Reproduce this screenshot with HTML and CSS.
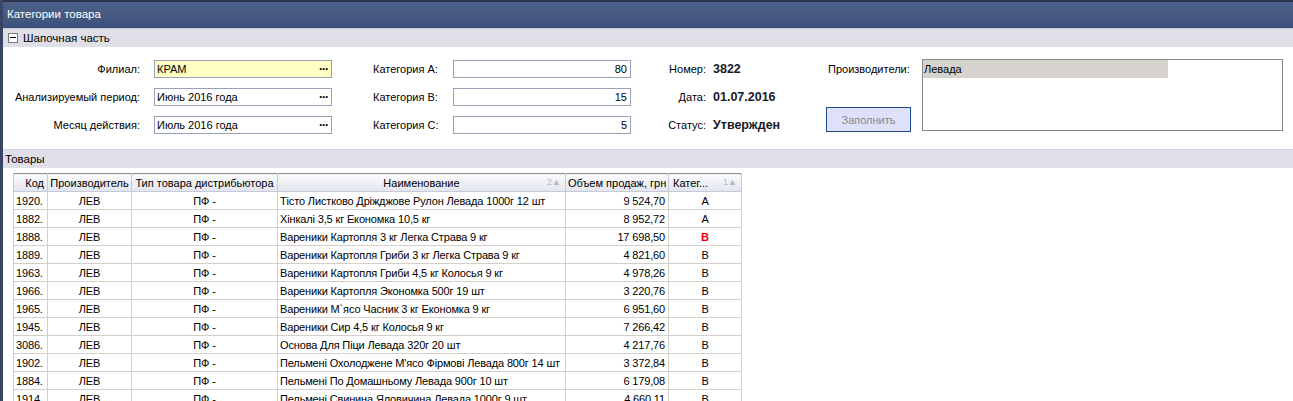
FILE: index.html
```html
<!DOCTYPE html>
<html lang="ru">
<head>
<meta charset="utf-8">
<title>Категории товара</title>
<link rel="stylesheet" href="styles.css">
</head>
<body>
<div class="window">
  <div class="titlebar">Категории товара</div>
  <div class="section-head"><span class="collapse"></span>Шапочная часть</div>
  <div class="form">
    <div class="group g1">
      <label>Филиал:</label>
      <div class="input yellow"><span>КРАМ</span><span class="dots">···</span></div>
      <label>Анализируемый период:</label>
      <div class="input"><span>Июнь 2016 года</span><span class="dots">···</span></div>
      <label>Месяц действия:</label>
      <div class="input"><span>Июль 2016 года</span><span class="dots">···</span></div>
    </div>
    <div class="group g2">
      <label>Категория A:</label>
      <div class="input num">80</div>
      <label>Категория B:</label>
      <div class="input num">15</div>
      <label>Категория C:</label>
      <div class="input num">5</div>
    </div>
    <div class="group g3">
      <label>Номер:</label>
      <div class="value">3822</div>
      <label>Дата:</label>
      <div class="value">01.07.2016</div>
      <label>Статус:</label>
      <div class="value">Утвержден</div>
    </div>
    <div class="g4">
      <label>Производители:</label>
      <button class="fill" disabled>Заполнить</button>
    </div>
    <div class="listbox">
      <div class="list-item">Левада</div>
    </div>
  </div>
  <div class="section-head goods">Товары</div>
  <div class="grid-wrap">
    <table class="grid">
      <colgroup>
        <col class="c-code"><col class="c-man"><col class="c-type"><col class="c-name"><col class="c-vol"><col class="c-cat">
      </colgroup>
      <thead>
        <tr>
          <th class="r">Код</th>
          <th>Производитель</th>
          <th>Тип товара дистрибьютора</th>
          <th>Наименование<span class="sort">2▲</span></th>
          <th>Объем продаж, грн</th>
          <th class="l">Катег...<span class="sort">1▲</span></th>
        </tr>
      </thead>
      <tbody>
        <tr><td>1920.</td><td class="c">ЛЕВ</td><td class="c">ПФ -</td><td>Тісто Листково Дріжджове Рулон Левада 1000г 12 шт</td><td class="r">9 524,70</td><td class="c">A</td></tr>
        <tr><td>1882.</td><td class="c">ЛЕВ</td><td class="c">ПФ -</td><td>Хінкалі 3,5 кг Економка 10,5 кг</td><td class="r">8 952,72</td><td class="c">A</td></tr>
        <tr><td>1888.</td><td class="c">ЛЕВ</td><td class="c">ПФ -</td><td>Вареники Картопля 3 кг Легка Страва 9 кг</td><td class="r">17 698,50</td><td class="c red">B</td></tr>
        <tr><td>1889.</td><td class="c">ЛЕВ</td><td class="c">ПФ -</td><td>Вареники Картопля Гриби 3 кг Легка Страва 9 кг</td><td class="r">4 821,60</td><td class="c">B</td></tr>
        <tr><td>1963.</td><td class="c">ЛЕВ</td><td class="c">ПФ -</td><td>Вареники Картопля Гриби 4,5 кг Колосья 9 кг</td><td class="r">4 978,26</td><td class="c">B</td></tr>
        <tr><td>1966.</td><td class="c">ЛЕВ</td><td class="c">ПФ -</td><td>Вареники Картопля Экономка 500г 19 шт</td><td class="r">3 220,76</td><td class="c">B</td></tr>
        <tr><td>1965.</td><td class="c">ЛЕВ</td><td class="c">ПФ -</td><td>Вареники М`ясо Часник 3 кг Економка 9 кг</td><td class="r">6 951,60</td><td class="c">B</td></tr>
        <tr><td>1945.</td><td class="c">ЛЕВ</td><td class="c">ПФ -</td><td>Вареники Сир 4,5 кг Колосья 9 кг</td><td class="r">7 266,42</td><td class="c">B</td></tr>
        <tr><td>3086.</td><td class="c">ЛЕВ</td><td class="c">ПФ -</td><td>Основа Для Піци Левада 320г 20 шт</td><td class="r">4 217,76</td><td class="c">B</td></tr>
        <tr><td>1902.</td><td class="c">ЛЕВ</td><td class="c">ПФ -</td><td>Пельмені Охолоджене М'ясо Фірмові Левада 800г 14 шт</td><td class="r">3 372,84</td><td class="c">B</td></tr>
        <tr><td>1884.</td><td class="c">ЛЕВ</td><td class="c">ПФ -</td><td>Пельмені По Домашньому Левада 900г 10 шт</td><td class="r">6 179,08</td><td class="c">B</td></tr>
        <tr><td>1914.</td><td class="c">ЛЕВ</td><td class="c">ПФ -</td><td>Пельмені Свинина Яловичина Левада 1000г 9 шт</td><td class="r">4 660,11</td><td class="c">B</td></tr>
      </tbody>
    </table>
  </div>
</div>
</body>
</html>
```
FILE: styles.css
```css
* { box-sizing: border-box; }
html, body { margin: 0; padding: 0; background: #ffffff; }
body {
  font-family: "Liberation Sans", Arial, sans-serif;
  font-size: 11px;
  color: #000;
  overflow: hidden;
  height: 401px;
}
.window {
  border-left: 3px solid #3a4566;
  min-height: 401px;
}
.titlebar {
  height: 28px;
  border-top: 2px solid #2a3350;
  background: linear-gradient(#4c5f89, #44587f 60%, #3a4f7d);
  color: #fff;
  padding: 6px 0 0 4px;
  font-size: 11.5px;
}
.section-head {
  height: 19px;
  border-top: 1px solid #c9cee0;
  background: #dfdfe8;
  display: flex;
  align-items: center;
  padding-left: 5px;
  font-size: 11.5px;
}
.collapse {
  width: 10px;
  height: 10px;
  border: 1px solid #7a7a7a;
  background: #fff;
  position: relative;
  margin-right: 5px;
}
.collapse::after {
  content: "";
  position: absolute;
  left: 1px;
  right: 1px;
  top: 3px;
  height: 1px;
  background: #000;
}
.form {
  height: 100px;
  display: flex;
  align-items: flex-start;
  padding-top: 13px;
}
.group {
  display: grid;
  grid-auto-rows: 18px;
  row-gap: 10px;
  align-items: center;
}
.group label { white-space: nowrap; }
.g1 { grid-template-columns: 137px 178px; column-gap: 14px; }
.g1 label { text-align: right; }
.g2 { grid-template-columns: 80px 178px; margin-left: 41px; }
.g3 { grid-template-columns: 55px 90px; column-gap: 7px; margin-left: 20px; }
.g3 label { text-align: right; }
.input {
  height: 18px;
  border: 1px solid #9ba0b8;
  background: #fff;
  display: flex;
  align-items: center;
  justify-content: space-between;
  padding: 0 3px 0 2px;
}
.input.yellow { background: #ffffc4; }
.input.num { justify-content: flex-end; }
.dots { font-weight: bold; letter-spacing: -1px; font-size: 12px; }
.value { font-weight: bold; font-size: 12.5px; color: #1a1a2a; }
.g4 {
  margin-left: 23px;
  width: 85px;
  height: 72px;
  display: flex;
  flex-direction: column;
  justify-content: space-between;
  align-items: flex-start;
  padding-top: 3px;
}
.g4 label { padding-left: 2px; }
.fill {
  width: 85px;
  height: 25px;
  background: #dfe0fc;
  border: 1px solid #1a4c8c;
  color: #8a8a8a;
  font: inherit;
  padding: 0;
}
.listbox {
  margin-left: 11px;
  margin-top: -1px;
  width: 361px;
  height: 72px;
  border: 1px solid #8a8a8a;
  background: #fff;
}
.list-item {
  width: 245px;
  height: 18px;
  background: #d6d3ce;
  padding-left: 1px;
  line-height: 18px;
}
.section-head.goods {
  margin-top: 2px;
  border-top: 1px solid #d0d4e2;
  padding-left: 2px;
}
.grid-wrap {
  padding: 5px 0 0 10px;
}
.grid {
  border-collapse: collapse;
  table-layout: fixed;
  width: 728px;
  border-left: 1px solid #8e8e8e;
  border-top: 1px solid #8e8e8e;
}
.c-code { width: 34px; }
.c-man { width: 84px; }
.c-type { width: 146px; }
.c-name { width: 288px; }
.c-vol { width: 103px; }
.c-cat { width: 73px; }
.grid th {
  height: 18px;
  font-weight: normal;
  background: linear-gradient(#fbfcfd, #eef0f5 50%, #e2e5ee);
  border: 1px solid #c6cad8;
  border-top: none;
  text-align: center;
  white-space: nowrap;
  overflow: hidden;
  padding: 0 2px;
  position: relative;
}
.grid th.r { text-align: right; padding-right: 3px; }
.grid th.l { text-align: left; padding-left: 4px; }
.sort {
  position: absolute;
  right: 4px;
  top: 3px;
  color: #b6b9c4;
  font-size: 9px;
}
.grid td {
  height: 18px;
  border: 1px solid #d4d0c8;
  padding: 0 2px;
  white-space: nowrap;
  overflow: hidden;
  letter-spacing: -0.15px;
}
.grid td.c { text-align: center; }
.grid td.r { text-align: right; padding-right: 3px; }
.grid td.red { color: #e8000b; font-weight: bold; }
```
